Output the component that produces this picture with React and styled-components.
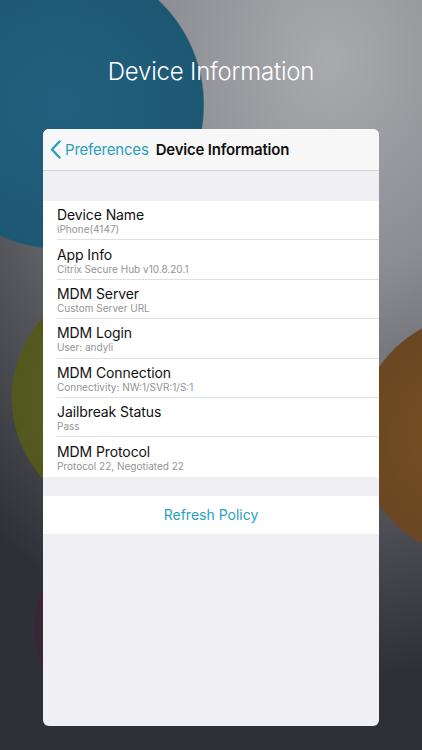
import React from 'react';
import styled, { createGlobalStyle } from 'styled-components';

const GlobalStyle = createGlobalStyle`
  html, body {
    margin: 0;
    padding: 0;
  }
  body {
    font-family: Inter, "Liberation Sans", sans-serif;
    -webkit-font-smoothing: antialiased;
  }
`;

const Screen = styled.div`
  width: 422px;
  height: 750px;
  box-sizing: border-box;
  display: flex;
  flex-direction: column;
  align-items: center;
  padding-top: 57px;
  overflow: hidden;
  background:
    radial-gradient(circle 146px at 60px 105px, #21617f 0, #1d5873 98%, transparent 99%),
    radial-gradient(circle 122px at 132px 398px, #5c6322 0, #53581f 98%, transparent 99%),
    radial-gradient(circle 124px at 480px 436px, #7a5222 0, #6a4722 98%, transparent 99%),
    radial-gradient(circle 95px at 128px 628px, #3f2a3b 0, #392735 98%, transparent 99%),
    radial-gradient(ellipse 520px 620px at 330px 60px, #a9aaae 0, #8c8d92 35%, #55565c 70%, #2f3036 100%);
`;

const Heading = styled.h1`
  margin: 0;
  font-size: 24px;
  line-height: 29px;
  font-weight: 300;
  color: #ffffff;
  letter-spacing: -0.2px;
`;

const Card = styled.div`
  margin-top: 43px;
  width: 336px;
  height: 597px;
  border-radius: 6px;
  overflow: hidden;
  background: #efeff4;
  display: flex;
  flex-direction: column;
`;

const NavBar = styled.div`
  height: 41px;
  flex-shrink: 0;
  display: flex;
  align-items: center;
  padding-left: 7px;
  background: #f7f7f8;
  border-bottom: 1px solid #d4d4d8;
`;

const BackButton = styled.div`
  display: flex;
  align-items: center;
  gap: 4px;
  color: #2a9fc0;
  font-size: 15px;
  letter-spacing: -0.2px;
`;

const NavTitle = styled.div`
  margin-left: 7px;
  font-size: 15px;
  font-weight: 600;
  color: #111;
  letter-spacing: -0.2px;
`;

const Group = styled.div`
  margin-top: ${p => p.$gap}px;
  background: #ffffff;
  display: flex;
  flex-direction: column;
`;

const Row = styled.div`
  height: 39.4px;
  box-sizing: border-box;
  margin-left: 14px;
  padding-top: 2px;
  display: flex;
  flex-direction: column;
  justify-content: center;
  border-bottom: ${p => (p.$last ? 'none' : '1px solid #e0e0e4')};
`;

const RowTitle = styled.div`
  font-size: 14px;
  color: #111;
  line-height: 17px;
  letter-spacing: -0.1px;
`;

const RowSub = styled.div`
  font-size: 10px;
  color: #939398;
  line-height: 13px;
`;

const ActionRow = styled.div`
  height: 38px;
  display: flex;
  align-items: center;
  justify-content: center;
  font-size: 14px;
  color: #2a9fc0;
`;

const rows = [
  ['Device Name', 'iPhone(4147)'],
  ['App Info', 'Citrix Secure Hub v10.8.20.1'],
  ['MDM Server', 'Custom Server URL'],
  ['MDM Login', 'User: andyli'],
  ['MDM Connection', 'Connectivity: NW:1/SVR:1/S:1'],
  ['Jailbreak Status', 'Pass'],
  ['MDM Protocol', 'Protocol 22, Negotiated 22'],
];

const Chevron = () => (
  <svg width="11" height="19" viewBox="0 0 11 19">
    <path d="M9.5 1.5 L2 9.5 L9.5 17.5" fill="none" stroke="#2a9fc0" strokeWidth="2.4" strokeLinecap="round" strokeLinejoin="round" />
  </svg>
);

const App = () => (
  <>
    <GlobalStyle />
    <Screen>
      <Heading>Device Information</Heading>
      <Card>
        <NavBar>
          <BackButton>
            <Chevron />
            Preferences
          </BackButton>
          <NavTitle>Device Information</NavTitle>
        </NavBar>
        <Group $gap={30}>
          {rows.map(([title, sub], i) => (
            <Row key={title} $last={i === rows.length - 1}>
              <RowTitle>{title}</RowTitle>
              <RowSub>{sub}</RowSub>
            </Row>
          ))}
        </Group>
        <Group $gap={19}>
          <ActionRow>Refresh Policy</ActionRow>
        </Group>
      </Card>
    </Screen>
  </>
);

export default App;
